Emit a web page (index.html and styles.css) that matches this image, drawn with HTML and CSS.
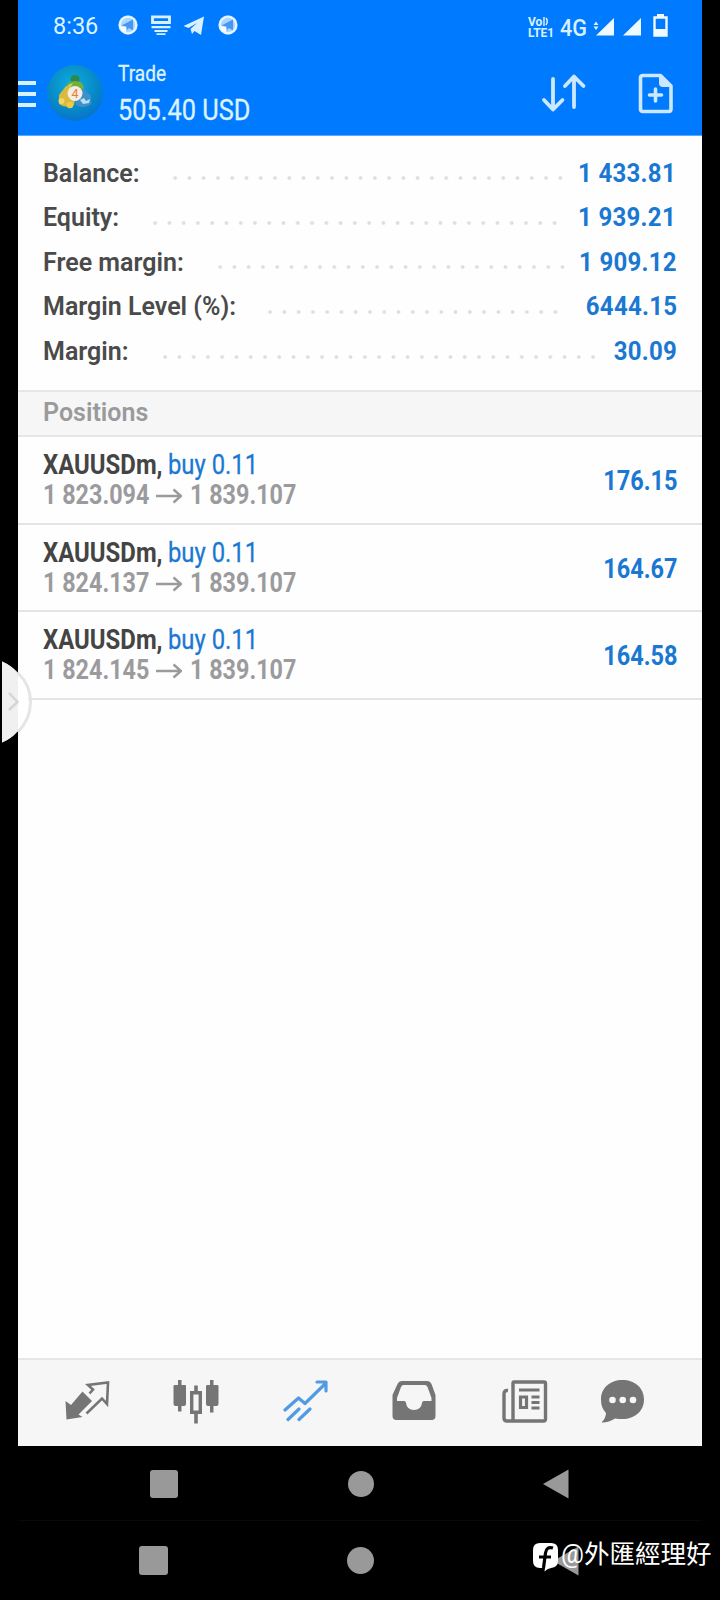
FILE: index.html
```html
<!DOCTYPE html>
<html lang="en">
<head>
<meta charset="utf-8">
<title>Trade</title>
<link rel="stylesheet" href="styles.css">
</head>
<body>
<div class="screen">
  <main class="app">
    <header class="top">
      <div class="status">
        <span class="clock">8:36</span>
        <svg class="status-left" width="122" height="24" viewBox="0 0 122 24" fill="#d9f1ff">
          <g id="tg"><circle cx="11" cy="12" r="9.700" fill="#a9d5ff"/><circle cx="11" cy="12" r="8.200" fill="none" stroke="#e9f6ff" stroke-width="2"/><path d="M4.500 12.500L16 6.500V17.500L12 15L10 17L9.500 13.500Z" fill="#4597f3"/><path d="M3 13L9 14V19L5 18Z" fill="#f5fbff"/></g>
          <path d="M35.500 3.900H52.500V9.500H35.500Z" fill="none" stroke="#d9f1ff" stroke-width="2.800"/>
          <path d="M34.500 13H53.500V15.300H34.500ZM37.500 17H50.500V19H37.500ZM39.500 20.300H48.500V22H39.500Z"/>
          <path d="M66.500 13L87 3.500L84 22L77.500 18L75 21L73.500 16L80 10L71.500 15Z"/>
          <use href="#tg" x="100"/>
        </svg>
        <svg class="status-right" width="144" height="30" viewBox="0 -4 144 30" fill="#d9f1ff">
          <text font-family="Roboto, sans-serif" font-weight="700" font-size="12"><tspan x="1" y="12">Vo</tspan><tspan x="1" y="22.500">LTE1</tspan></text>
          <path d="M17 3V12M19 4Q21.500 7 19 11" fill="none" stroke="#d9f1ff" stroke-width="1.500"/>
          <text x="33" y="21.500" font-family="Roboto, sans-serif" font-weight="500" font-size="24.500" textLength="27" lengthAdjust="spacingAndGlyphs">4G</text>
          <path d="M66.500 11L69 7.500L71.500 11ZM66.500 12.500L69 16L71.500 12.500Z"/>
          <path d="M69 21.500L87 4V21.500ZM96 21.500L114 4V21.500Z" fill="#effaff"/>
          <path d="M127.500 3.500H139.500V21.500H127.500Z" fill="none" stroke="#effaff" stroke-width="2.400"/>
          <path d="M130 0H137V3H130ZM128 15H139V21H128Z" fill="#effaff"/>
        </svg>
      </div>
      <div class="toolbar">
        <div class="burger"><i></i><i></i><i></i></div>
        <svg class="logo" width="58" height="58" viewBox="0 0 58 58">
          <defs><radialGradient id="lg" cx=".45" cy=".35" r=".7"><stop offset="0" stop-color="#0faedb"/><stop offset=".6" stop-color="#078ac8"/><stop offset="1" stop-color="#0670cf"/></radialGradient></defs>
          <circle cx="29" cy="29" r="28" fill="url(#lg)"/>
          <circle cx="29" cy="15.500" r="4.500" fill="#2c8a4c"/>
          <path d="M20 24Q21 17 29 17Q37 17 38 24L36 30H22Z" fill="#74ae3d"/>
          <path d="M20 22L13 31L13 40Q20 45 28 41L30 29L24 22Z" fill="#d9ba3f"/>
          <path d="M37 24L45 32L45 40Q38 46 30 41L29 34Z" fill="#3f8fcb"/>
          <circle cx="15.500" cy="37" r="3" fill="#f1d75e"/><circle cx="24" cy="41" r="3.300" fill="#edcb48"/>
          <path d="M34 36L38 34L40 37L44 35L43 39L37 40Z" fill="#b9e1f2"/>
          <path d="M22 21L27 19L24 24Z" fill="#b5dc64"/>
          <circle cx="29" cy="29.500" r="7.500" fill="#f3eee1"/>
          <text x="29" y="34" text-anchor="middle" font-family="Roboto, sans-serif" font-size="12.500" fill="#ee7a35">4</text>
        </svg>
        <div class="title">
          <div class="title-name"><span>Trade</span></div>
          <div class="title-sum"><span>505.40 USD</span></div>
        </div>
        <svg class="sort" width="46" height="42" viewBox="0 0 46 42" fill="none" stroke="#cbe8ff" stroke-width="3.800" stroke-linecap="round" stroke-linejoin="round">
          <path d="M12 6V36M3 27L12 36.500L21.500 27M33 34V4.500M24 13L33 3.500L42.500 13"/>
        </svg>
        <svg class="new-order" width="36" height="42" viewBox="0 0 36 42" fill="none" stroke="#cbe8ff" stroke-width="3.600" stroke-linejoin="round">
          <path d="M5 2.500H22.500L33 13V36Q33 38.500 30.500 38.500H5Q2.500 38.500 2.500 36V5Q2.500 2.500 5 2.500Z"/>
          <path d="M22 2.500V10Q22 13 25 13H33Z" fill="#cbe8ff" stroke-width="2"/>
          <path d="M17.500 16V28M11.500 22H23.500" stroke-linecap="round"/>
        </svg>
      </div>
    </header>

    <section class="summary">
      <div class="sum-row"><span class="label" style="width:125.2px">Balance:</span><i class="dots" style="width:399.6px"></i><b class="short">1 433.81</b></div>
      <div class="sum-row"><span class="label" style="width:105.2px">Equity:</span><i class="dots" style="width:413.8px"></i><b class="short">1 939.21</b></div>
      <div class="sum-row"><span class="label" style="width:169.9px">Free margin:</span><i class="dots" style="width:356.8px"></i><b>1 909.12</b></div>
      <div class="sum-row"><span class="label" style="width:220.2px">Margin Level (%):</span><i class="dots" style="width:299.7px"></i><b>6444.15</b></div>
      <div class="sum-row"><span class="label" style="width:114.9px">Margin:</span><i class="dots" style="width:442.4px"></i><b>30.09</b></div>
    </section>

    <h2 class="section">Positions</h2>
    <section class="positions">
      <div class="pos">
        <div class="pos-info">
          <div class="line"><strong>XAUUSDm,</strong><em>buy 0.11</em></div>
          <div class="line prices"><span>1 823.094</span><svg width="26" height="16" viewBox="0 0 26 16"><path d="M0 8H25M17.500 1.500L25 8L17.500 14.500"/></svg><span>1 839.107</span></div>
        </div>
        <b class="profit">176.15</b>
      </div>
      <div class="pos">
        <div class="pos-info">
          <div class="line"><strong>XAUUSDm,</strong><em>buy 0.11</em></div>
          <div class="line prices"><span>1 824.137</span><svg width="26" height="16" viewBox="0 0 26 16"><path d="M0 8H25M17.500 1.500L25 8L17.500 14.500"/></svg><span>1 839.107</span></div>
        </div>
        <b class="profit">164.67</b>
      </div>
      <div class="pos">
        <div class="pos-info">
          <div class="line"><strong>XAUUSDm,</strong><em>buy 0.11</em></div>
          <div class="line prices"><span>1 824.145</span><svg width="26" height="16" viewBox="0 0 26 16"><path d="M0 8H25M17.500 1.500L25 8L17.500 14.500"/></svg><span>1 839.107</span></div>
        </div>
        <b class="profit">164.58</b>
      </div>
    </section>

    <nav class="tabs">
      <svg width="46" height="46" viewBox="0 0 46 46">
        <path d="M1.500 21L7 25L18.500 11.500L28 21L14.500 34.500L18.500 37L2.500 39.500Z" fill="#757575"/>
        <path d="M22.500 33.500L38 18.500L43 24L44 2.500L24 5L29 9.500L25.500 13.500" fill="none" stroke="#757575" stroke-width="2.600"/>
      </svg>
      <svg width="46" height="46" viewBox="0 0 46 46" fill="#757575">
        <path d="M5 0H8.500V5H12Q13 5 13 6V24Q13 26 11 26H8.500V31.500H5V26H2.500Q.5 26 .5 24V6Q.5 5 2 5H5Z"/>
        <path d="M37 0H40.500V5H44Q45.500 5 45.500 6V24Q45.500 26 43.500 26H40.500V32.500H37V26H35Q33 26 33 24V6Q33 5 34.500 5H37Z"/>
        <path d="M21.200 5.500H24.800V12H21.200ZM21.200 33H24.800V43.500H21.200Z"/>
        <path d="M18.700 12.700H27.300V32.300H18.700Z" fill="none" stroke="#757575" stroke-width="3.400"/>
      </svg>
      <svg width="46" height="46" viewBox="0 0 46 46" fill="none" stroke="#509be4" stroke-width="3.200" stroke-linecap="round" stroke-linejoin="round">
        <path d="M2 30L15.500 18L22 23.500L42 4M34 2H43V11M5 39.500L16 29M16 39.500L27 29"/>
      </svg>
      <svg width="46" height="46" viewBox="0 0 46 46">
        <path fill-rule="evenodd" d="M10 1H35Q38 1 39.500 4L43.500 15V36Q43.500 40 39.500 40H4.500Q.5 40 .5 36V15L5.500 4Q7 1 10 1ZM11.500 5Q10 5 9 7L5 18V21H12Q14 21 14 23Q15 30 22 30Q29 30 30 23Q30 21 32 21H39.500V18L35.500 7Q34.500 5 33 5Z" fill="#757575"/>
      </svg>
      <svg width="46" height="46" viewBox="0 0 46 46" fill="none" stroke="#757575" stroke-width="3.400">
        <path d="M12 2H42Q43.500 2 43.500 3.500V39Q43.500 41 41.500 41H13Q11 41 11 39V3.500Q11 2 12 2ZM6 10.500Q2 10 2 14V38Q2 41 5 41H13"/>
        <path d="M17 10H37.500M29.500 17H37.500M29.500 22.500H37.500M29.500 28H37.500M18.500 17H24.500V27.500H18.500Z" stroke-width="3.200"/>
      </svg>
      <svg class="chat" width="46" height="46" viewBox="0 0 46 46">
        <path d="M22.500 0C35 0 44 8 44 19.500C44 31 35 39 22.500 39C20 39 17.500 39 15 38.500Q8 43 1.500 42.500Q6 38 6 33Q1 28 1 19.500C1 8 10 0 22.500 0Z" fill="#757575"/>
        <circle cx="12.500" cy="20" r="3.300" fill="#f6f6f6"/><circle cx="22.700" cy="20" r="3.300" fill="#f6f6f6"/><circle cx="33" cy="20" r="3.300" fill="#f6f6f6"/>
      </svg>
    </nav>
    <div class="keys inner-keys"><i class="square"></i><i class="circle"></i><svg class="back" width="26" height="30" viewBox="0 0 26 30"><path d="M25.500 .5V29.500L0 15Z"/></svg></div>
  </main>

  <div class="keys outer-keys"><i class="square"></i><i class="circle"></i><svg class="back" width="26" height="30" viewBox="0 0 26 30"><path d="M25.500 .5V29.500L0 15Z"/></svg></div>

  <svg class="drawer" width="32" height="86" viewBox="0 0 32 86">
    <path d="M0 2.500A44 44 0 0 1 0 83.500Z" fill="#fff"/>
    <path d="M0 2.500A44 44 0 0 1 16 14V72A44 44 0 0 1 0 83.500Z" fill="#f0f0f0"/>
    <path d="M16 14Q28.500 26 28.500 43T16 73" fill="none" stroke="#e5e5e5" stroke-width="3"/>
    <path d="M7 34L15.500 43L7 51" fill="none" stroke="#d5d5d5" stroke-width="2.500"/>
  </svg>
  <div class="watermark">
    <svg width="25" height="29" viewBox="0 0 25 29"><path d="M7 0H18Q25 0 25 7V18Q25 24 18 25Q14 25.500 11.500 28.500L12 25H7Q0 25 0 18V7Q0 0 7 0Z" fill="#fff"/><path d="M20 5Q13.500 3 12.500 10L10.500 25M6 14H18" fill="none" stroke="#000" stroke-width="3.200"/></svg>
    <span>@外匯經理好</span>
  </div>
</div>
</body>
</html>
```
FILE: styles.css
```css
* { box-sizing: border-box; }
body { margin: 0; background: #000; font-family: Roboto, "Liberation Sans", sans-serif; }
.screen { position: relative; width: 720px; height: 1600px; overflow: hidden; background: #000; }
.app { width: 684px; margin-left: 18px; background: #fefefe; }
i, em { font-style: normal; }
svg { display: block; flex: none; }

.top { height: 136px; background: #007aff; border-bottom: 1px solid #5aa8fb; color: #dcf3ff; }
.status { display: flex; height: 52px; padding: 13px 30px 0 35px; }
.clock { width: 64px; font-size: 23.500px; line-height: 27px; }
.status-right { margin: -3px 1px 0 auto; }
.toolbar { display: flex; height: 84px; }
.burger { width: 18px; padding-top: 29px; display: flex; flex-direction: column; gap: 7px; }
.burger i { height: 4px; background: #d9f1ff; }
.logo { margin: 12px 0 0 10px; }
.title { width: 408px; padding: 7px 0 0 14px; white-space: nowrap; }
.title span { display: inline-block; transform-origin: left; -webkit-text-stroke: .3px; }
.title-name { font-size: 22.500px; line-height: 28px; height: 32px; }
.title-name span { transform: scaleX(.85); }
.title-sum { font-size: 29px; line-height: 38px; }
.title-sum span { transform: scaleX(.875); }
.sort { margin: 21px 0 0 29px; }
.new-order { margin: 21px 0 0 51px; }

.summary { height: 254px; padding: 15.500px 25px 0; }
.sum-row { display: flex; height: 44.650px; line-height: 44.650px; font-size: 25px; font-weight: 600; color: #4a4a4a; white-space: nowrap; }
.label { flex: none; }
.dots { flex: none; height: 6px; margin-top: 23.500px; background: radial-gradient(circle, #dedede 0 1.300px, transparent 2.400px) 0 0 / 14.270px 6px repeat-x; }
.sum-row b { margin-left: auto; color: #1a78d2; font-weight: 700; letter-spacing: .3px; transform: scaleX(.96); transform-origin: right; }
.sum-row .short { padding-right: 1px; }

.section { height: 47px; margin: 0; padding-left: 25px; border-top: 2px solid #e6e6e6; border-bottom: 2px solid #e6e6e6; background: #f6f6f6; color: #9a9a9c; font-size: 25px; font-weight: 600; line-height: 41px; }
.positions { height: 921px; }
.pos { display: flex; justify-content: space-between; height: 87.500px; padding: 10px 25px 0; border-bottom: 2px solid #e4e4e4; }
.line { display: flex; height: 30px; line-height: 36px; font-size: 27.500px; white-space: nowrap; }
.line > span, .line > strong, .line > em { flex: none; transform-origin: left; }
.line strong { width: 125px; color: #444; transform: scaleX(.87); }
.line em { color: #1a78d2; transform: scaleX(.865); -webkit-text-stroke: .3px; }
.prices { color: #9b9b9d; font-size: 27px; font-weight: 700; }
.prices span { width: 113px; transform: scaleX(.865); }
.prices svg { margin: 11px 8px 0 0; fill: none; stroke: #9b9b9d; stroke-width: 2.500; }
.profit { color: #1a78d2; font-size: 28px; line-height: 67px; transform: scaleX(.84); transform-origin: right; }

.tabs { display: grid; grid-template-columns: repeat(5, 109.400px) auto; height: 88px; padding: 20px 0 0 46px; border-top: 2px solid #e6e6e6; background: #f6f6f6; }
.chat { margin-left: -11px; }
.keys { display: flex; background: #000; }
.square { background: #999; border-radius: 3px; }
.circle { background: #999; border-radius: 50%; }
.back path { fill: #999; }
.inner-keys { height: 75px; border-bottom: 1px solid #07070c; padding: 24px 0 0 132px; }
.inner-keys .square { width: 28px; height: 28px; }
.inner-keys .circle { width: 26px; height: 26px; margin: 1px 0 0 170px; }
.inner-keys .back { margin: -1px 0 0 169px; }
.outer-keys { height: 79px; padding: 25px 0 0 139px; }
.outer-keys .square { width: 29px; height: 29px; }
.outer-keys .circle { width: 27px; height: 27px; margin: 1px 0 0 179px; }
.outer-keys .back { margin: 0 0 0 179px; }

.drawer { position: absolute; left: 2px; top: 659px; }
.watermark { position: absolute; left: 532px; top: 1541px; display: flex; align-items: flex-start; color: #fff; font: 25.500px/27px Roboto, "Noto Sans CJK TC", sans-serif; white-space: nowrap; }
.watermark svg { margin: 2px 3px 0 1px; }
```
